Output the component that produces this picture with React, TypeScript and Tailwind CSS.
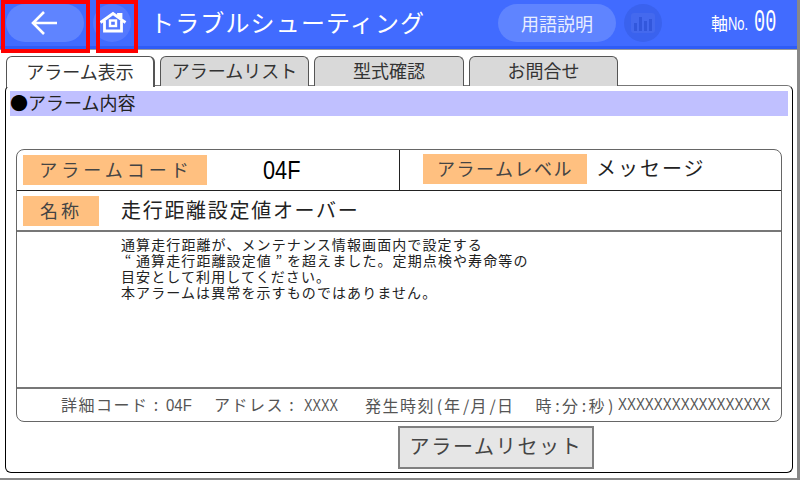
import type { ReactNode } from 'react';

const jp = "font-['Noto_Sans_CJK_JP','Liberation_Sans',sans-serif]";

const tabs = [
  { label: 'アラーム表示', width: 'w-[149px]' },
  { label: 'アラームリスト', width: 'w-[149px]' },
  { label: '型式確認', width: 'w-[150px]' },
  { label: 'お問合せ', width: 'w-[149px]' },
];

function HomeIcon() {
  return (
    <svg width="26" height="20" viewBox="0 0 26 20" fill="none" stroke="white" strokeWidth="2.8" className="ml-[2px] mb-[2px] overflow-visible">
      <path d="M0.5 10.5 L13 1.5 L18.5 5.5 V2.5 H21 V7.3 L25.5 10.5" />
      <path d="M4.5 8.5 V19 H21.5 V8.5" />
      <rect x="10" y="8.5" width="6" height="5.5" strokeWidth="2.4" />
    </svg>
  );
}

function ChartIcon() {
  return (
    <svg width="24" height="20" viewBox="0 0 24 20">
      <rect x="0" y="0" width="24" height="20" rx="3" fill="#4469ee" />
      <rect x="3" y="10" width="3" height="8" fill="#3257dc" />
      <rect x="8" y="4" width="3" height="14" fill="#3257dc" />
      <rect x="13" y="8" width="3" height="10" fill="#3257dc" />
      <rect x="18" y="6" width="3" height="12" fill="#3257dc" />
    </svg>
  );
}

function Header() {
  return (
    <div className="h-[49px] shrink-0 bg-[#416bff] border-b-[3px] border-b-[#2f5cf6] flex items-center text-white relative shadow-[0_1px_0_#999]">
      <div className="ml-[6px] w-[78px] h-[38px] rounded-full bg-[#5f84ff] flex items-center justify-center">
        <svg width="28" height="26" viewBox="0 0 28 26" fill="none" stroke="white" strokeWidth="2.6">
          <path d="M2 13 H26 M13 2 L2 13 L13 24" />
        </svg>
      </div>
      <div className="ml-[9px] w-[38px] h-[38px] rounded-full bg-[#5579ff] flex items-center justify-center">
        <HomeIcon />
      </div>
      <div className="ml-[19px] w-[348px] text-[24px] tracking-[1.15px] leading-none pb-[2px]">トラブルシューティング</div>
      <div className="w-[118px] h-[38px] rounded-full bg-[#5f84ff] flex items-center justify-center text-[18px] text-[#e8eeff]">用語説明</div>
      <div className="ml-[8px] w-[38px] h-[38px] rounded-full bg-[#3a62ee] flex items-center justify-center">
        <ChartIcon />
      </div>
      <div className="ml-[49px] w-[43px] text-[17px] leading-none flex items-baseline">
        軸<span className="font-['Liberation_Sans',sans-serif] text-[18px] scale-x-[0.72] origin-left inline-block">No.</span>
      </div>
      <div className="font-['Liberation_Mono',monospace] text-[32px] leading-none scale-x-[0.58] origin-left">00</div>
      <div className="absolute left-[1px] top-0 w-[89px] h-[53px] border-[4px] border-[#ff0000] z-10" />
      <div className="absolute left-[96px] top-0 w-[42px] h-[53px] border-[4px] border-[#ff0000] z-10" />
    </div>
  );
}

function Tabs() {
  return (
    <div className="flex gap-[5px] ml-[6px] mt-[7px] h-[30px] shrink-0 relative z-[1]">
      {tabs.map((t, i) => (
        <div
          key={t.label}
          className={`${t.width} pb-[3px] rounded-t-[6px] border border-b-0 border-[#555] flex items-center justify-center text-[18px] leading-none text-[#333] ${i === 0 ? 'bg-white h-[31px] border-r-2' : 'bg-[#d9d9d9] h-[30px]'}`}
        >
          {t.label}
        </div>
      ))}
    </div>
  );
}

function Label({ text, className }: { text: string; className: string }) {
  return (
    <div className={`h-[30px] pb-[3px] bg-[#ffc080] flex items-center justify-center text-[18px] leading-none text-[#444] ${className}`}>
      {text}
    </div>
  );
}

// half width punctuation in the footer line
function P({ children }: { children: ReactNode }) {
  return <span className="inline-block w-[9px] text-center tracking-normal">{children}</span>;
}

// narrow latin text in the footer line
function Latin({ children, className }: { children: ReactNode; className: string }) {
  return <span className={`inline-block font-['Liberation_Sans',sans-serif] text-[17px] tracking-normal origin-left ${className}`}>{children}</span>;
}

function AlarmCard() {
  return (
    <div className="mt-[33px] mx-[10px] h-[273px] shrink-0 rounded-[8px] border border-[#666] flex flex-col">
      <div className="h-[41px] flex border-b border-[#222] shrink-0">
        <div className="w-[383px] flex items-center border-r border-[#222] pl-[6px]">
          <Label text="アラームコード" className="w-[184px] pl-[2px] tracking-[4px]" />
          <div className="ml-[56px] font-['Liberation_Sans',sans-serif] text-[25px] leading-none text-black scale-x-[0.87] origin-left">04F</div>
        </div>
        <div className="flex items-center pl-[23px] pb-[2px]">
          <Label text="アラームレベル" className="w-[164px] tracking-[1.5px]" />
          <div className="ml-[9px] text-[20px] leading-none tracking-[2px] text-[#222] pb-[3px]">メッセージ</div>
        </div>
      </div>
      <div className="h-[41px] flex items-center border-b-2 border-[#777] pl-[6px] pt-[1px] shrink-0">
        <Label text="名称" className="w-[76px] tracking-[3px]" />
        <div className="ml-[22px] text-[20px] leading-none tracking-[1.7px] text-[#222] pb-[3px]">走行距離設定値オーバー</div>
      </div>
      <div className="flex-1 pl-[104px] pt-[4px] text-[14px] leading-[16px] tracking-[1.1px] text-[#222]">
        <div>通算走行距離が、メンテナンス情報画面内で設定する</div>
        <div>
          <span className="inline-block w-[15px] text-center">“</span>通算走行距離設定値<span className="inline-block w-[15px] text-center">”</span>を超えました。定期点検や寿命等の
        </div>
        <div>目安として利用してください。</div>
        <div>本アラームは異常を示すものではありません。</div>
      </div>
      <div className="h-[34px] border-t-2 border-[#777] flex items-center pl-[44px] pb-[1px] text-[16px] tracking-[1.5px] leading-none text-[#555] whitespace-nowrap shrink-0 overflow-hidden">
        <span className="w-[153px] shrink-0">詳細コード<span className="ml-[3px]"><P>:</P></span><Latin className="ml-[5px] scale-x-[0.88]">04F</Latin></span>
        <span className="w-[151px] shrink-0">アドレス<span className="ml-[3px]"><P>:</P></span><Latin className="ml-[8px] scale-x-[0.75]">XXXX</Latin></span>
        <span className="w-[253px] shrink-0">
          発生時刻<P>(</P>年<P>/</P>月<P>/</P>日<span className="ml-[21px]">時<P>:</P>分<P>:</P>秒<P>)</P></span>
        </span>
        <Latin className="shrink-0 scale-x-[0.79]">XXXXXXXXXXXXXXXXX</Latin>
      </div>
    </div>
  );
}

export default function App() {
  return (
    <div className={`w-[800px] h-[480px] bg-[#888] overflow-hidden ${jp}`}>
      <div className="w-[797px] h-[478px] bg-white flex flex-col">
        <Header />
        <Tabs />
        <div className="ml-[5px] w-[788px] h-[388px] shrink-0 -mt-px border border-black border-t-[#777] rounded-[6px] flex flex-col relative">
          <div className="mt-[5px] mx-[4px] h-[25px] pb-[3px] bg-[#c0c0ff] flex items-center text-[18px] leading-none text-[#222]">
            <span className="text-black">●</span>アラーム内容
          </div>
          <AlarmCard />
          <div className="mt-[4px] ml-[392px] w-[196px] h-[43px] pb-[3px] border-2 border-[#808080] bg-[#e6e6e6] flex items-center justify-center text-[20px] leading-none tracking-[1.7px] text-[#444]">
            アラームリセット
          </div>
        </div>
      </div>
    </div>
  );
}
